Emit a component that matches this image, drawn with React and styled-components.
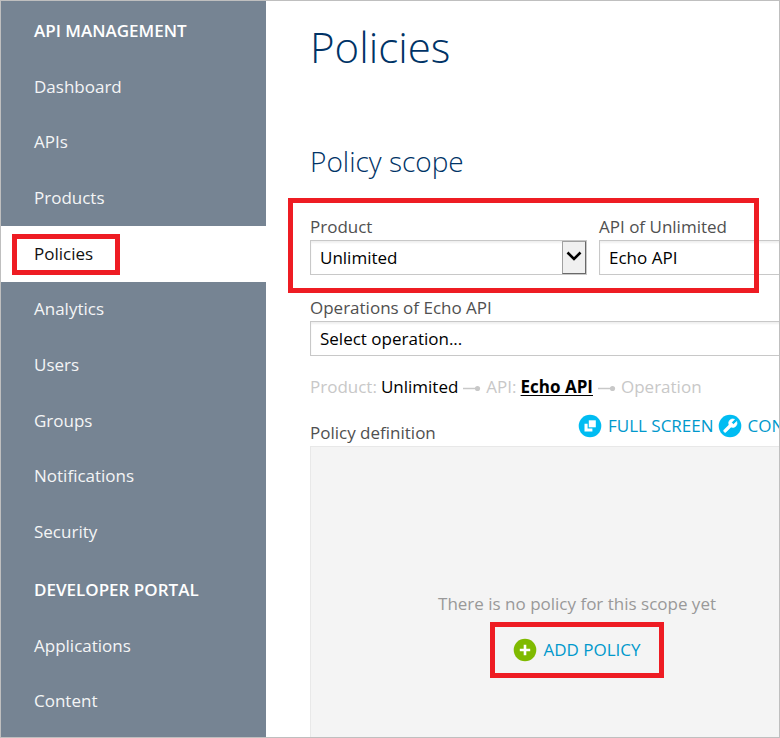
import React from "react";
import styled, { createGlobalStyle, css } from "styled-components";

const GlobalStyle = createGlobalStyle`
  *, *::before, *::after { box-sizing: border-box; }
  body {
    margin: 0;
    font-family: "Open Sans", "Noto Sans", sans-serif;
    font-size: 17px;
    line-height: 24px;
    color: #505050;
    background: #fff;
  }
`;

const Page = styled.div`
  display: flex;
  min-height: 100vh;
  border: 1px solid #bfbfbf;
  overflow: hidden;
`;

const Sidebar = styled.nav`
  flex: none;
  width: 265px;
  display: flex;
  flex-direction: column;
  padding-bottom: 8px;
  background: #768493;
`;

const SidebarHeading = styled.h2`
  flex: none;
  margin: 0;
  padding: 18px 33px 16px;
  font-size: 17px;
  line-height: 24px;
  font-weight: 600;
  text-transform: uppercase;
  color: #fff;
`;

const NavList = styled.ul`
  display: flex;
  flex-direction: column;
  flex: ${(p) => p.$count} 0 auto;
  margin: 0;
  padding: 0;
  list-style: none;
`;

const NavItem = styled.li`
  display: flex;
  flex: 1 0 48px;
`;

const NavLink = styled.a`
  display: flex;
  flex: 1;
  align-items: center;
  padding: 0 33px;
  text-decoration: none;
  color: ${(p) => (p.$active ? "#111" : "#f4f5f6")};
  background: ${(p) => (p.$active ? "#fff" : "transparent")};
`;

const NavLabel = styled.span`
  position: relative;
`;

const outline = css`
  content: "";
  position: absolute;
  border: 5px solid #ee1c23;
  pointer-events: none;
`;

const MarkedNavLabel = styled(NavLabel)`
  &::after {
    ${outline}
    inset: -8px -27px -9px -22px;
  }
`;

const Main = styled.main`
  flex: 1;
  min-width: 0;
  display: flex;
  overflow: hidden;
`;

const Content = styled.div`
  flex: 1 0 auto;
  width: calc(100% + 21px);
  margin-left: 44px;
  margin-right: -65px;
  display: flex;
  flex-direction: column;
`;

const Title = styled.h1`
  margin: 16px 0 0;
  font-size: 42px;
  line-height: 60px;
  font-weight: 300;
  color: #003366;
`;

const SectionTitle = styled.h2`
  margin: 64px 0 0;
  font-size: 28px;
  line-height: 40px;
  font-weight: 300;
  color: #003366;
`;

const ScopeRow = styled.div`
  position: relative;
  display: grid;
  grid-template-columns: 277px 1fr;
  gap: 12px;
  margin-top: 34px;
  &::after {
    ${outline}
    inset: -17px 85px -18px -22px;
  }
`;

const Field = styled.div`
  display: flex;
  flex-direction: column;
  gap: 1px;
`;

const FieldLabel = styled.label`
  line-height: 24px;
`;

const SelectBox = styled.div`
  position: relative;
  display: grid;
`;

const Select = styled.select`
  appearance: none;
  width: 100%;
  height: 35px;
  padding: 0 9px;
  border: 1px solid #c8c8c8;
  border-radius: 0;
  background: #fff;
  box-shadow: inset 0 2px 2px #f0f0f0;
  font: inherit;
  color: #000;
`;

const SelectArrow = styled.span`
  position: absolute;
  top: 1px;
  right: 1px;
  bottom: 1px;
  width: 24px;
  display: flex;
  align-items: center;
  justify-content: center;
  padding-bottom: 4px;
  border: 1px solid #a0a0a0;
  border-right-color: #696969;
  border-bottom-color: #696969;
  background: #f0f0f0;
  pointer-events: none;
`;

const OperationField = styled(Field)`
  margin-top: 21px;
`;

const Trail = styled.div`
  display: flex;
  align-items: center;
  gap: 4px;
  margin-top: 19px;
  color: #c8c8c8;
`;

const TrailValue = styled.span`
  color: #000;
`;

const TrailLink = styled.a`
  color: #000;
  font-weight: 700;
  text-underline-offset: 2px;
`;

const DefinitionBar = styled.div`
  display: flex;
  align-items: flex-end;
  justify-content: space-between;
  margin-top: 15px;
`;

const DefinitionLabel = styled.span`
  padding-bottom: 1px;
`;

const Tools = styled.div`
  display: flex;
  gap: 4px;
  width: 266px;
  padding-bottom: 8px;
`;

const ToolButton = styled.button`
  display: flex;
  flex: none;
  align-items: center;
  gap: 6px;
  padding: 0;
  border: 0;
  background: none;
  font: inherit;
  text-transform: uppercase;
  color: #0099cc;
  cursor: pointer;
`;

const Panel = styled.section`
  flex: 1;
  display: flex;
  flex-direction: column;
  align-items: center;
  padding: 145px 0 40px;
  border: 1px solid #e8e8e8;
  border-bottom: 0;
  background: #f4f4f4;
`;

const EmptyText = styled.p`
  margin: 0;
  color: #999;
`;

const AddPolicy = styled(ToolButton)`
  margin-top: 6px;
  padding: 11px 18px;
  border: 5px solid #ee1c23;
`;

const ChevronIcon = () => (
  <svg width="16" height="12" viewBox="0 0 16 12" aria-hidden="true">
    <path d="M1.5 2.5 L8 9 L14.5 2.5" fill="none" stroke="#000" strokeWidth="2.6" />
  </svg>
);

const ConnectorIcon = () => (
  <svg width="20" height="8" viewBox="0 0 20 8" aria-hidden="true">
    <path d="M1 5.5H14" stroke="#c8c8c8" strokeWidth="1.5" />
    <circle cx="15.5" cy="5.5" r="2.6" fill="#c8c8c8" />
  </svg>
);

const FullScreenIcon = () => (
  <svg width="24" height="24" viewBox="0 0 24 24" aria-hidden="true">
    <circle cx="12" cy="12" r="11.3" fill="#00bcf2" />
    <path d="M10.8 6.3H17.8V13.3H10.8Z" fill="#fff" />
    <path d="M6.5 9.8H9.6V14.5H14.4V17.5H6.5Z" fill="#fff" />
  </svg>
);

const WrenchIcon = () => (
  <svg width="24" height="24" viewBox="0 0 24 24" aria-hidden="true">
    <circle cx="12" cy="12" r="11.3" fill="#00bcf2" />
    <path
      transform="translate(3.6 3.6) scale(0.7)"
      d="M14.7 6.3a1 1 0 0 0 0 1.4l1.6 1.6a1 1 0 0 0 1.4 0l3.77-3.77a6 6 0 0 1-7.94 7.94l-6.91 6.91a2.12 2.12 0 0 1-3-3l6.91-6.91a6 6 0 0 1 7.94-7.94z"
      fill="#fff"
      stroke="#fff"
      strokeWidth="1"
    />
  </svg>
);

const AddIcon = () => (
  <svg width="24" height="24" viewBox="0 0 24 24" aria-hidden="true">
    <circle cx="12" cy="12" r="11.3" fill="#7fba00" />
    <path d="M12 6.8V17.2M6.8 12H17.2" stroke="#fff" strokeWidth="2.6" />
  </svg>
);

const managementLinks = [
  "Dashboard",
  "APIs",
  "Products",
  "Policies",
  "Analytics",
  "Users",
  "Groups",
  "Notifications",
  "Security",
];
const portalLinks = ["Applications", "Content"];

function NavSection({ title, links, active }) {
  return (
    <>
      <SidebarHeading>{title}</SidebarHeading>
      <NavList $count={links.length}>
        {links.map((name) => {
          const current = name === active;
          const Label = current ? MarkedNavLabel : NavLabel;
          return (
            <NavItem key={name}>
              <NavLink
                href={"#" + name.toLowerCase()}
                $active={current}
                aria-current={current ? "page" : undefined}
              >
                <Label>{name}</Label>
              </NavLink>
            </NavItem>
          );
        })}
      </NavList>
    </>
  );
}

function SelectField({ id, label, value, arrow, as: Wrapper = Field }) {
  return (
    <Wrapper>
      <FieldLabel htmlFor={id}>{label}</FieldLabel>
      <SelectBox>
        <Select id={id} defaultValue={value}>
          <option>{value}</option>
        </Select>
        {arrow && (
          <SelectArrow>
            <ChevronIcon />
          </SelectArrow>
        )}
      </SelectBox>
    </Wrapper>
  );
}

export default function App() {
  return (
    <Page>
      <GlobalStyle />
      <Sidebar>
        <NavSection title="API Management" links={managementLinks} active="Policies" />
        <NavSection title="Developer Portal" links={portalLinks} />
      </Sidebar>
      <Main>
        <Content>
          <Title>Policies</Title>
          <SectionTitle>Policy scope</SectionTitle>
          <ScopeRow>
            <SelectField id="product" label="Product" value="Unlimited" arrow />
            <SelectField id="api" label="API of Unlimited" value="Echo API" />
          </ScopeRow>
          <SelectField
            id="operation"
            label="Operations of Echo API"
            value="Select operation..."
            as={OperationField}
          />
          <Trail>
            <span>Product:</span>
            <TrailValue>Unlimited</TrailValue>
            <ConnectorIcon />
            <span>API:</span>
            <TrailLink href="#echo-api">Echo API</TrailLink>
            <ConnectorIcon />
            <span>Operation</span>
          </Trail>
          <DefinitionBar>
            <DefinitionLabel>Policy definition</DefinitionLabel>
            <Tools>
              <ToolButton type="button">
                <FullScreenIcon />
                Full screen
              </ToolButton>
              <ToolButton type="button">
                <WrenchIcon />
                Con
              </ToolButton>
            </Tools>
          </DefinitionBar>
          <Panel>
            <EmptyText>There is no policy for this scope yet</EmptyText>
            <AddPolicy type="button">
              <AddIcon />
              Add policy
            </AddPolicy>
          </Panel>
        </Content>
      </Main>
    </Page>
  );
}
